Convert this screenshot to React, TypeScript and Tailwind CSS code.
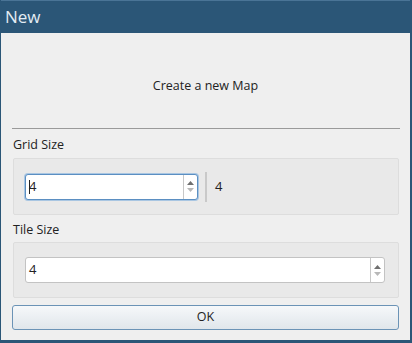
import React from 'react';

function SpinArrows() {
  return (
    <div className="flex flex-col items-center justify-center w-[14px] border-l border-[#c8c8c8] h-full gap-[3px]">
      <svg width="7" height="4" viewBox="0 0 7 4"><path d="M0 4 L3.5 0 L7 4 Z" fill="#6f6f6f" /></svg>
      <svg width="7" height="4" viewBox="0 0 7 4"><path d="M0 0 L3.5 4 L7 0 Z" fill="#b8b8b8" /></svg>
    </div>
  );
}

function SpinBox({ focused, width }: { focused?: boolean; width: string }) {
  return (
    <div
      className={`flex items-stretch h-[26px] bg-white rounded-[3px] border ${width} ${
        focused ? 'border-[#5b8fc2] shadow-[0_0_0_1px_#a9c6e2]' : 'border-[#c3c3c3]'
      }`}
    >
      <div className="flex-1 flex items-center pl-[3px] text-[13px] text-[#222]">
        {focused && <span className="w-px h-[14px] bg-[#222] mr-[-1px]" />}
        <span>4</span>
      </div>
      <SpinArrows />
    </div>
  );
}

export default function App() {
  return (
    <div
      className="w-[412px] h-[343px] bg-[#2b5677] flex flex-col pl-[1px] pr-[2px] pb-[3px]"
      style={{ fontFamily: '"Open Sans", "DejaVu Sans", sans-serif' }}
    >
      <div className="h-[33px] flex items-center pl-[4px] text-[17px] text-[#e3ecf3] border-t border-[#4a7496]">
        New
      </div>
      <div className="flex-1 bg-[#efefef] flex flex-col px-[11px] text-[12px] text-[#222]">
        <div className="h-[95px] flex items-center justify-center text-[12.5px] pt-[12px]">
          Create a new Map
        </div>
        <div className="h-px bg-[#9a9a9a] mr-[-1px]" />
        <div className="pt-[7px] pl-[1px] h-[29px] text-[12.5px]">Grid Size</div>
        <div className="ml-[1px] h-[57px] border border-[#dddddd] bg-[#e9e9e9] rounded-[2px] flex items-center pl-[11px] gap-[7px]">
          <SpinBox focused width="w-[173px]" />
          <div className="w-[2px] h-[30px] bg-[#c9c9c9]" />
          <div className="text-[13px] pl-[1px]">4</div>
        </div>
        <div className="pt-[6px] pl-[1px] h-[27px] text-[12.5px]">Tile Size</div>
        <div className="ml-[1px] h-[56px] border border-[#dddddd] bg-[#e9e9e9] rounded-[2px] flex items-center pl-[11px] pr-[13px]">
          <SpinBox width="flex-1 h-[25px]" />
        </div>
        <div className="mt-[7px] h-[25px] rounded-[3px] border border-[#6b93b6] bg-gradient-to-b from-[#f6f8fa] to-[#e0e6eb] flex items-center justify-center text-[12.5px]">
          OK
        </div>
      </div>
    </div>
  );
}
